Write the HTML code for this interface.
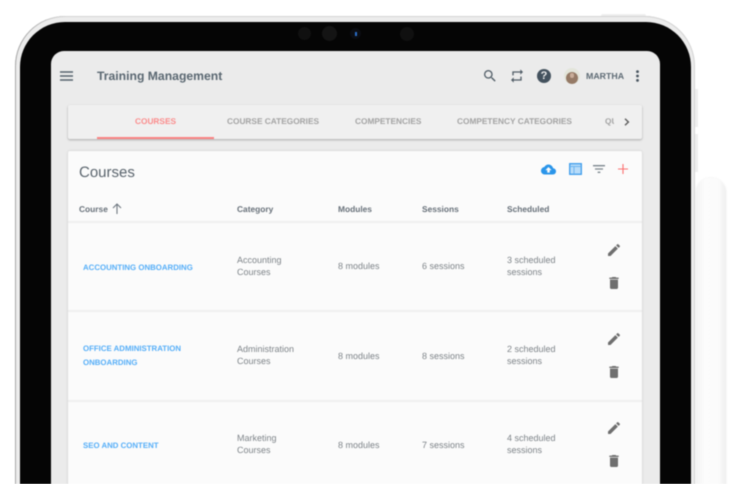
<!DOCTYPE html>
<html><head><meta charset="utf-8"><style>
html,body{margin:0;padding:0;background:#fff}
#r{position:relative;width:738px;height:484px;overflow:hidden;background:#fff;font-family:"Liberation Sans",sans-serif;filter:blur(.4px);text-rendering:geometricPrecision}
#r div,#r svg{position:absolute}
.t{white-space:nowrap}
.tab{font-size:8.3px;font-weight:700;color:#a3a3a3;top:116px;line-height:10px;white-space:nowrap}
.h{font-size:8.4px;font-weight:700;color:#68717a;top:204px;line-height:10px;white-space:nowrap}
.c{font-size:9px;color:#7e8489;line-height:12.3px;white-space:nowrap}
.l{font-size:7.85px;font-weight:700;color:#55aef8;line-height:14px;white-space:nowrap;left:83px}
.line{left:68px;width:574px;height:1.5px;background:#efefef}
</style></head><body><div id="r">
<div style="left:601px;top:14px;width:45px;height:8px;background:#eee;border-radius:2px 2px 0 0"></div>
<div style="left:694px;top:89px;width:4px;height:38px;background:#efefef"></div>
<div style="left:694px;top:134px;width:4px;height:38px;background:#efefef"></div>
<div style="left:15px;top:16px;width:680px;height:520px;border-radius:50px;background:#ececec;box-shadow:inset 1px 0 0 #a9a9a9,inset 0 0 0 1px #d4d4d4"></div>
<div style="left:20px;top:22px;width:671px;height:520px;border-radius:45px;background:#050505"></div>
<div style="left:298px;top:27px;width:13px;height:13px;border-radius:50%;background:#101010"></div>
<div style="left:322px;top:26px;width:15px;height:15px;border-radius:50%;background:#141414"></div>
<div style="left:350px;top:28px;width:11px;height:11px;border-radius:50%;background:#0b0d12"></div>
<div style="left:355px;top:32px;width:2px;height:4px;background:#2b6fc9"></div>
<div style="left:400px;top:27px;width:14px;height:14px;border-radius:50%;background:#101010"></div>
<div style="left:51px;top:51px;width:609px;height:500px;border-radius:13px 13px 0 0;background:#ebebeb"></div>

<svg style="left:60px;top:71px" width="13" height="10"><path d="M0 1H13M0 5H13M0 9H13" stroke="#55626d" stroke-width="1.4"/></svg>
<div class="t" style="left:97px;top:69px;font-size:12.2px;line-height:14px;font-weight:700;color:#5b6872">Training Management</div>

<svg style="left:482px;top:68px" width="16" height="16" viewBox="0 0 24 24"><path fill="#515d67" d="M15.5 14h-.79l-.28-.27A6.471 6.471 0 0 0 16 9.5 6.5 6.5 0 1 0 9.5 16c1.61 0 3.09-.59 4.23-1.57l.27.28v.79l5 4.99L20.49 19l-4.99-5zm-6 0C7.01 14 5 11.99 5 9.5S7.01 5 9.5 5 14 7.01 14 9.5 11.99 14 9.5 14z"/></svg>
<svg style="left:509px;top:68px" width="16" height="16" viewBox="0 0 24 24"><path fill="#515d67" d="M7 7h10v3l4-4-4-4v3H5v6h2V7zm10 10H7v-3l-4 4 4 4v-3h12v-6h-2v4z"/></svg>
<div style="left:537px;top:69px;width:14px;height:14px;border-radius:50%;background:#44525e;color:#ececec;font-size:11px;font-weight:700;text-align:center;line-height:14px">?</div>
<div style="left:564px;top:68px;width:16px;height:16px;border-radius:50%;background:#e3e5da;overflow:hidden"><div style="left:2px;top:4px;width:12px;height:12px;border-radius:6px;background:#957a66"></div><div style="left:6px;top:5px;width:4px;height:5px;border-radius:2px;background:#c9ad99"></div></div>
<div class="t" style="left:586px;top:71px;font-size:8.8px;line-height:10px;font-weight:700;color:#5d6a74">MARTHA</div>
<svg style="left:635px;top:70px" width="5" height="12"><circle cx="2.5" cy="1.6" r="1.4" fill="#47535e"/><circle cx="2.5" cy="6" r="1.4" fill="#47535e"/><circle cx="2.5" cy="10.4" r="1.4" fill="#47535e"/></svg>

<div style="left:68px;top:105px;width:574px;height:34px;background:#f0f0f0;border-radius:2px;box-shadow:0 1px 2px rgba(0,0,0,.28)"></div>
<div style="left:97px;top:137px;width:117px;height:2px;background:#fb8383"></div>
<div class="tab" style="left:135px;color:#fb8c8c">COURSES</div>
<div class="tab" style="left:227px">COURSE CATEGORIES</div>
<div class="tab" style="left:355px">COMPETENCIES</div>
<div class="tab" style="left:457px">COMPETENCY CATEGORIES</div>
<div class="tab" style="left:605px;width:9px;overflow:hidden">QUIZZES</div>
<svg style="left:624px;top:118px" width="6" height="8"><path d="M1 .8L4.4 4L1 7.2" fill="none" stroke="#5c5c5c" stroke-width="1.4"/></svg>

<div style="left:68px;top:151px;width:574px;height:340px;background:#fbfbfb;border-radius:2px;box-shadow:0 0 2px rgba(0,0,0,.16)"></div>
<div class="t" style="left:79px;top:164px;font-size:15px;line-height:17px;color:#5a646d">Courses</div>
<svg style="left:541px;top:161.5px" width="15" height="15" viewBox="0 0 24 24"><path fill="#2a95ea" d="M19.35 10.04A7.49 7.49 0 0 0 12 4C9.11 4 6.6 5.64 5.35 8.04A5.994 5.994 0 0 0 0 14c0 3.31 2.69 6 6 6h13c2.76 0 5-2.24 5-5 0-2.64-2.05-4.78-4.65-4.96zM14 13v4h-4v-4H7l5-5 5 5h-3z"/></svg>
<svg style="left:569px;top:163px" width="13" height="12" viewBox="0 0 13 12"><rect x=".7" y=".7" width="11.6" height="10.6" fill="#b8dcf9" stroke="#3d9cec" stroke-width="1.3"/><path d="M1 3.5H12M5 3.500V11" stroke="#6db5f0"/></svg>
<svg style="left:591px;top:161px" width="16" height="16" viewBox="0 0 24 24"><path fill="#7b858d" d="M10 18h4v-2h-4v2zM3 6v2h18V6H3zm3 7h12v-2H6v2z"/></svg>
<svg style="left:618px;top:164px" width="10" height="10"><path d="M5 0V10M0 5H10" stroke="#fb7070" stroke-width="1.1"/></svg>

<div class="h" style="left:79px">Course</div>
<svg style="left:112px;top:203px" width="10" height="11"><path d="M5 11V1M1 5L5 1L9 5" fill="none" stroke="#6f7880" stroke-width="1.1"/></svg>
<div class="h" style="left:237px">Category</div>
<div class="h" style="left:338px">Modules</div>
<div class="h" style="left:422px">Sessions</div>
<div class="h" style="left:507px">Scheduled</div>
<div class="line" style="top:221px"></div>
<div class="line" style="top:310px"></div>
<div class="line" style="top:400px"></div>

<div class="l" style="top:260.5px">ACCOUNTING ONBOARDING</div>
<div class="c" style="left:237px;top:253.500px">Accounting<br>Courses</div>
<div class="c" style="left:338px;top:260px">8 modules</div>
<div class="c" style="left:422px;top:260px">6 sessions</div>
<div class="c" style="left:507px;top:253.5px">3 scheduled<br>sessions</div>

<div class="l" style="top:341.5px">OFFICE ADMINISTRATION<br>ONBOARDING</div>
<div class="c" style="left:237px;top:342.5px">Administration<br>Courses</div>
<div class="c" style="left:338px;top:349.500px">8 modules</div>
<div class="c" style="left:422px;top:349.500px">8 sessions</div>
<div class="c" style="left:507px;top:342.5px">2 scheduled<br>sessions</div>

<div class="l" style="top:438.5px">SEO AND CONTENT</div>
<div class="c" style="left:237px;top:431.5px">Marketing<br>Courses</div>
<div class="c" style="left:338px;top:438.500px">8 modules</div>
<div class="c" style="left:422px;top:438.500px">7 sessions</div>
<div class="c" style="left:507px;top:431.5px">4 scheduled<br>sessions</div>

<svg style="left:606px;top:242px" width="16" height="16" viewBox="0 0 24 24"><path fill="#6f6f6f" d="M3 17.25V21h3.75L17.81 9.94l-3.75-3.75L3 17.25zM20.71 7.04a1 1 0 0 0 0-1.41l-2.34-2.34a1 1 0 0 0-1.41 0l-1.83 1.83 3.75 3.75 1.83-1.83z"/></svg>
<svg style="left:605.5px;top:274.5px" width="16" height="16" viewBox="0 0 24 24"><path fill="#6f6f6f" d="M6 19c0 1.1.9 2 2 2h8c1.1 0 2-.9 2-2V7H6v12zM19 4h-3.5l-1-1h-5l-1 1H5v2h14V4z"/></svg>
<svg style="left:606px;top:331px" width="16" height="16" viewBox="0 0 24 24"><path fill="#6f6f6f" d="M3 17.25V21h3.75L17.81 9.94l-3.75-3.75L3 17.25zM20.71 7.04a1 1 0 0 0 0-1.41l-2.34-2.34a1 1 0 0 0-1.41 0l-1.83 1.83 3.75 3.75 1.83-1.83z"/></svg>
<svg style="left:605.5px;top:363.5px" width="16" height="16" viewBox="0 0 24 24"><path fill="#6f6f6f" d="M6 19c0 1.1.9 2 2 2h8c1.1 0 2-.9 2-2V7H6v12zM19 4h-3.5l-1-1h-5l-1 1H5v2h14V4z"/></svg>
<svg style="left:606px;top:420px" width="16" height="16" viewBox="0 0 24 24"><path fill="#6f6f6f" d="M3 17.25V21h3.75L17.81 9.94l-3.75-3.75L3 17.25zM20.71 7.04a1 1 0 0 0 0-1.41l-2.34-2.34a1 1 0 0 0-1.41 0l-1.83 1.83 3.75 3.75 1.83-1.83z"/></svg>
<svg style="left:605.5px;top:452.5px" width="16" height="16" viewBox="0 0 24 24"><path fill="#6f6f6f" d="M6 19c0 1.1.9 2 2 2h8c1.1 0 2-.9 2-2V7H6v12zM19 4h-3.5l-1-1h-5l-1 1H5v2h14V4z"/></svg>

<div style="left:696px;top:178px;width:30px;height:340px;border-radius:14px 14px 0 0;background:linear-gradient(90deg,#f3f3f3,#fcfcfc 30%,#fbfbfb 75%,#efefef);box-shadow:0 0 2px rgba(0,0,0,.08)"></div>
</div></body></html>
